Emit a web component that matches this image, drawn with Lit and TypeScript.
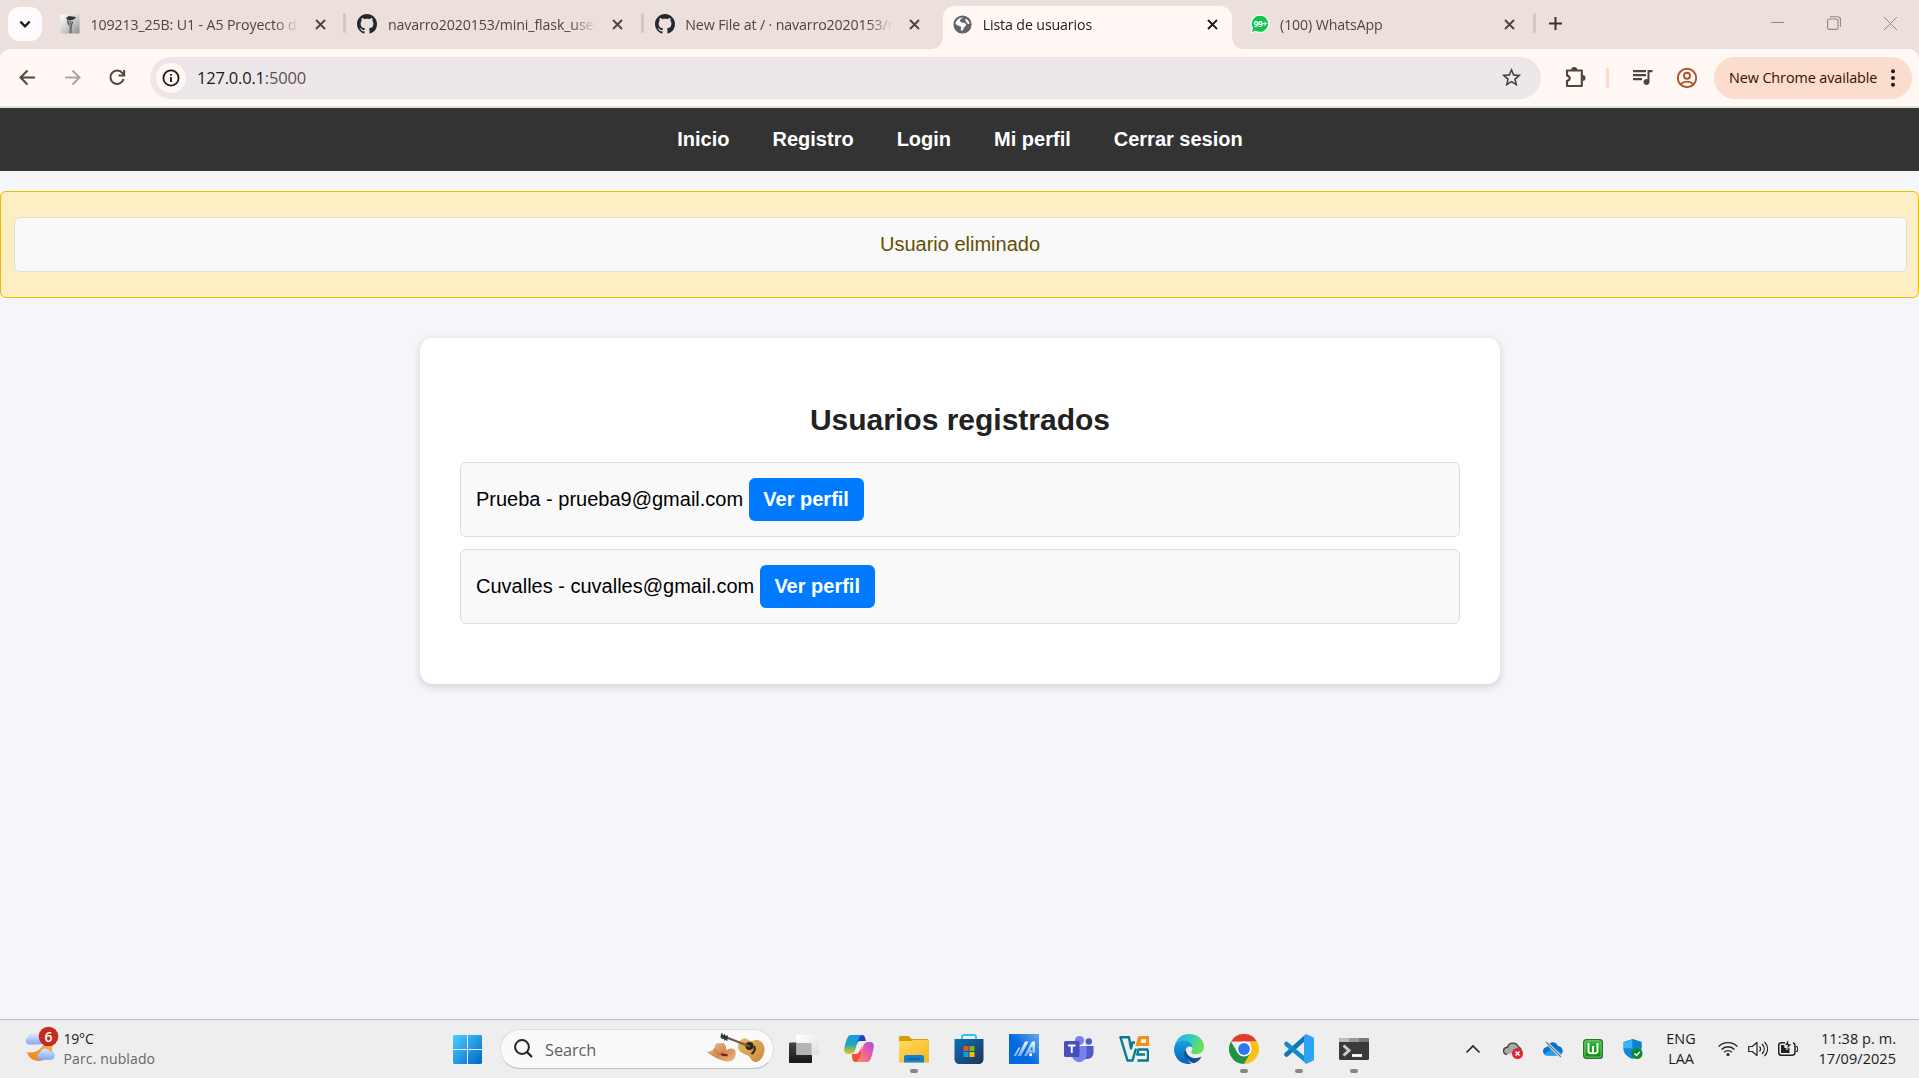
import { LitElement, html, css, svg } from 'lit';
import { customElement } from 'lit/decorators.js';

const icon = (size: number, box: number, body: unknown) =>
  html`<svg width=${size} height=${size} viewBox="0 0 ${box} ${box}" fill="none">${body}</svg>`;

const github = icon(20, 16, svg`<path fill="#24292f" d="M8 0C3.58 0 0 3.58 0 8c0 3.54 2.29 6.53 5.47 7.59.4.07.55-.17.55-.38 0-.19-.01-.82-.01-1.49-2.01.37-2.53-.49-2.69-.94-.09-.23-.48-.94-.82-1.13-.28-.15-.68-.52-.01-.53.63-.01 1.08.58 1.23.82.72 1.21 1.87.87 2.33.66.07-.52.28-.87.51-1.07-1.78-.2-3.64-.89-3.64-3.95 0-.87.31-1.59.82-2.15-.08-.2-.36-1.02.08-2.12 0 0 .67-.21 2.2.82.64-.18 1.32-.27 2-.27s1.36.09 2 .27c1.53-1.04 2.2-.82 2.2-.82.44 1.1.16 1.92.08 2.12.51.56.82 1.27.82 2.15 0 3.07-1.87 3.75-3.65 3.95.29.25.54.73.54 1.48 0 1.07-.01 1.93-.01 2.2 0 .21.15.46.55.38A8.01 8.01 0 0 0 16 8c0-4.42-3.58-8-8-8z"/>`);

const statue = icon(20, 20, svg`
  <defs><linearGradient id="st" x1="0" y1="0" x2="1" y2="1"><stop offset="0" stop-color="#fff"/><stop offset=".5" stop-color="#cfcfcf"/><stop offset="1" stop-color="#8d8d8d"/></linearGradient></defs>
  <rect x=".5" y=".5" width="19" height="19" rx="1" fill="url(#st)"/>
  <path fill="#333" d="M6 4l3-2 7 1-2 2.500-4 1-3-1z"/><path fill="#888" d="M8 6.500l5 1-1 5-1.500 7H9l.5-6.500-2-3z"/><path stroke="#555" d="M7.500 6l1 5M13 7.500l-2 4.500v7"/>`);

const globe = icon(19, 24, svg`<circle cx="12" cy="12" r="11.5" fill="#5f6368"/>
  <path fill="#fff8f5" d="M13 3.2c-1.2 1-2.600 1.200-3.600 2.400-1.200 1.500-.2 3 1.300 3.700 2 1 4.900.3 5.800 2.300.6 1.500-.8 2.700-2 3.600-1 .8-1 2.500-2 3.900-.6.9-2.300 1-2.700-.1-.3-1.200.9-2.200.5-3.400-.6-1.600-3.300-1.200-4.800-2.500C4 11.700 3 10.800 3 11c.5-4 4.500-8.200 10-7.800z"/><path fill="#fff8f5" d="M16 4.500c2.600 1.300 4.600 3.700 4.900 6.500-1.500.6-3-.1-3.700-1.400-.8-1.500-2.400-2.700-1.200-5.100z"/>`);

const whatsapp = html`<svg width="20" height="20" viewBox="0 0 20 20">
  <path d="M10.300 1.200a8.600 8.600 0 1 1-4.500 16L.9 19.200l1.500-5A8.600 8.600 0 0 1 10.300 1.200z" fill="#10c351" stroke="#e8fff0" stroke-width="1.300"/>
  <text x="10.300" y="13" text-anchor="middle" font-family="Open Sans, sans-serif" font-weight="700" font-size="8.500" fill="#fff" letter-spacing="-.4">99+</text></svg>`;

const cross = (c: string) => icon(11, 11, svg`<path d="M1 1l9 9M10 1l-9 9" stroke=${c} stroke-width="1.9"/>`);

interface Tab { title: string; art: unknown; active?: boolean; bar?: boolean; }
const tabs: Tab[] = [
  { title: '109213_25B: U1 - A5 Proyecto d', art: statue, bar: true },
  { title: 'navarro2020153/mini_flask_user', art: github, bar: true },
  { title: 'New File at / · navarro2020153/m', art: github },
  { title: 'Lista de usuarios', art: globe, active: true },
  { title: '(100) WhatsApp', art: whatsapp, bar: true },
];

@customElement('browser-tabs')
class BrowserTabs extends LitElement {
  static styles = css`
    :host { display: flex; height: 49px; background: #ebe0db; font-family: 'Open Sans', sans-serif; color: #51443c; }
    svg { display: block; }
    .search { width: 34px; height: 34px; margin: 7px 5px 0 8px; border-radius: 12px; background: #fffbff; display: grid; place-items: center; }
    .tab { width: 297.4px; height: 49px; position: relative; padding: 0 0 1px 13px; box-sizing: border-box; display: flex; align-items: center; }
    .art { width: 20px; display: grid; place-items: center; }
    .title { margin-left: 10.5px; width: 210px; white-space: nowrap; overflow: hidden; font-size: 14.2px; letter-spacing: -0.12px; line-height: 24px; padding-top: 1px;
      -webkit-mask-image: linear-gradient(90deg, #000 87%, transparent 99%); }
    .close { margin-left: 14px; display: grid; }
    .bar::after { content: ''; position: absolute; right: -2px; top: 13px; height: 20px; width: 3px; border-radius: 2px; background: #d3c6c1; }
    .active { color: #201a17; }
    .shape { position: absolute; left: -8px; top: 6px; }
    .active .art, .active .title, .active .close { position: relative; }
    .plus { margin: 17px 0 0 15.5px; }
    .wins { margin-left: auto; display: flex; height: 46px; align-items: center; padding-right: 22px; gap: 43px; }
  `;
  render() {
    return html`
      <div class="search">${icon(14, 12, svg`<path d="M2 4l4 4 4-4" stroke="#201a17" stroke-width="2"/>`)}</div>
      ${tabs.map(t => html`<div class="tab ${t.active ? 'active' : ''} ${t.bar ? 'bar' : ''}">
        ${t.active ? html`<svg class="shape" width="313" height="43" viewBox="0 0 313 43"><path fill="#fff8f5" d="M0 43c7 0 12-5 12-12V12C12 5 17 0 24 0h265c7 0 12 5 12 12v19c0 7 5 12 12 12z"/></svg>` : ''}
        <span class="art">${t.art}</span><span class="title">${t.title}</span>
        <span class="close">${cross(t.active ? '#201a17' : '#51443c')}</span></div>`)}
      <span class="plus">${icon(13, 13, svg`<path d="M6.500 0v13M0 6.500h13" stroke="#3c322c" stroke-width="2"/>`)}</span>
      <div class="wins">
        ${icon(13, 13, svg`<path d="M0 5.500h13" stroke="#938984"/>`)}
        ${icon(14, 14, svg`<rect x=".6" y="3" width="10.400" height="10.400" rx="1.500" stroke="#938984" stroke-width="1.100"/><path d="M3 .7h7.500a3 3 0 0 1 3 3V11" stroke="#938984" stroke-width="1.100"/>`)}
        ${icon(13, 13, svg`<path d="M0 0l13 13M13 0L0 13" stroke="#938984"/>`)}
      </div>`;
  }
}

@customElement('browser-toolbar')
class BrowserToolbar extends LitElement {
  static styles = css`
    :host { display: block; background: #ebe0db; font-family: 'Open Sans', sans-serif; }
    .row { height: 57px; background: #fff8f5; border-radius: 10px 10px 0 0; border-bottom: 2px solid #e9e0dd; display: flex; align-items: center; box-sizing: content-box; }
    svg { display: block; }
    .back { margin-left: 17px; }
    .mid { margin-left: 24px; }
    .omni { margin-left: 22px; width: 1391px; height: 42px; border-radius: 21px; background: #ede7e9; display: flex; align-items: center; }
    .info { width: 30px; height: 30px; margin-left: 6px; border-radius: 50%; background: #fff8f5; display: grid; place-items: center; }
    .url { margin-left: 11px; font-size: 16.5px; letter-spacing: -0.2px; color: #201a17; flex: 1; }
    .port { color: #5b5150; }
    .star { margin-right: 18px; }
    .puzzle { margin-left: 23px; }
    .rule { width: 2.5px; height: 20px; margin-left: 19px; border-radius: 1px; background: #fcd9c8; }
    .music { margin-left: 22px; }
    .user { margin-left: 21px; }
    .pill { margin-left: 16.5px; width: 198px; height: 42px; border-radius: 21px; background: #fbdccd; display: flex; align-items: center; font-size: 14.4px; letter-spacing: -0.1px; color: #351000; box-sizing: border-box; padding-left: 15px; white-space: nowrap; }
    .label { width: 153.5px; }
  `;
  render() {
    return html`<div class="row">
      <span class="back">${icon(21, 21, svg`<path d="M18 10.500H4M10.500 3.500l-7 7 7 7" stroke="#51443c" stroke-width="2"/>`)}</span>
      <span class="mid">${icon(21, 21, svg`<path d="M3 10.500h14M10.500 3.500l7 7-7 7" stroke="#afa5a0" stroke-width="2"/>`)}</span>
      <span class="mid">${icon(21, 21, svg`<path d="M16.600 12A6.700 6.700 0 1 1 15.500 6.200L17 8" stroke="#51443c" stroke-width="2"/><path d="M17.200 3v5.600h-5.600" stroke="#51443c" stroke-width="2"/>`)}</span>
      <div class="omni">
        <span class="info">${icon(18, 18, svg`<circle cx="9" cy="9" r="7.600" stroke="#201a17" stroke-width="1.800"/><path d="M9 8v5M9 5v1.800" stroke="#201a17" stroke-width="1.800"/>`)}</span>
        <span class="url">127.0.0.1<span class="port">:5000</span></span>
        <span class="star">${icon(23, 24, svg`<path fill="#453c38" d="M22 9.240l-7.190-.62L12 2 9.190 8.630 2 9.240l5.460 4.730L5.820 21 12 17.270 18.180 21l-1.630-7.030L22 9.240zM12 15.400l-3.760 2.270 1-4.280-3.320-2.880 4.380-.38L12 6.100l1.710 4.040 4.380.38-3.320 2.880 1 4.280L12 15.400z"/>`)}</span>
      </div>
      <span class="puzzle">${icon(23, 23, svg`<path d="M3 4.500h14.800v15.500H3v-5.200c3.600-.6 3.600-4.600 0-5.200z" stroke="#51443c" stroke-width="2.100" stroke-linejoin="round"/><path d="M7.200 4a3 3 0 0 1 6 0M18.500 9a3 3 0 0 1 0 6" fill="#51443c"/>`)}</span>
      <span class="rule"></span>
      <span class="music">${icon(24, 24, svg`<path fill="#51443c" d="M15 4H2v2.200h13V4zm0 4H2v2.200h13V8zM2 14.200h9V12H2v2.200zM16.500 4v9.180c-.31-.11-.65-.18-1-.18-1.660 0-3 1.340-3 3s1.340 3 3 3 3-1.340 3-3V6.200H21.500V4h-5z"/>`)}</span>
      <span class="user">${icon(22, 22, svg`<g stroke="#ad5429" stroke-width="1.900"><circle cx="11" cy="11" r="9.200"/><circle cx="11" cy="8.700" r="3"/><path d="M4.500 17.300c3.500-3.600 9.500-3.600 13 0"/></g>`)}</span>
      <div class="pill"><span class="label">New Chrome available</span>
        ${icon(20, 20, svg`<g fill="#201a17"><circle cx="10" cy="3.300" r="2"/><circle cx="10" cy="10" r="2"/><circle cx="10" cy="16.700" r="2"/></g>`)}</div>
    </div>`;
  }
}

const users = [
  { name: 'Prueba', mail: 'prueba9@gmail.com' },
  { name: 'Cuvalles', mail: 'cuvalles@gmail.com' },
];

@customElement('user-page')
class UserPage extends LitElement {
  static styles = css`
    :host { display: block; height: 911px; background: #f4f6fa; font: 20px/23px 'Liberation Sans', Arial, sans-serif; color: #000; }
    .nav { height: 63px; background: #333; display: flex; justify-content: center; align-items: center; gap: 43px; padding-left: 1px; font-weight: 700; color: #fff; }
    .flash { margin-top: 20px; height: 107px; box-sizing: border-box; border: 1px solid #e8bd00; border-radius: 6px; background: #fdeec4; padding: 25px 11px 0 13px; }
    .note { height: 55px; box-sizing: border-box; border: 1px solid #ddd; border-radius: 6px; background: #f9f9f9; color: #664d03; text-align: center; padding: 15px 1px 0 0; }
    .card { width: 1080px; height: 346px; box-sizing: border-box; margin: 40px auto 0; padding: 64px 40px 0; border-radius: 12.5px; background: #fff; box-shadow: 0 2.5px 10px rgba(0,0,0,.15); }
    .title { margin: 0 0 25px; padding-left: 1px; font-size: 30px; line-height: 35px; text-align: center; color: #222; }
    .item { height: 75px; box-sizing: border-box; border: 1px solid #ddd; border-radius: 6px; background: #f9f9f9; margin-bottom: 12px; padding-left: 15.5px; display: flex; align-items: center; gap: 5.5px; }
    .button { height: 43px; width: 115px; border-radius: 6px; background: #007bff; color: #fff; font-weight: 700; display: grid; place-items: center; }
  `;
  render() {
    return html`
      <nav class="nav">${['Inicio', 'Registro', 'Login', 'Mi perfil', 'Cerrar sesion'].map(l => html`<span>${l}</span>`)}</nav>
      <div class="flash"><div class="note">Usuario eliminado</div></div>
      <div class="card"><h2 class="title">Usuarios registrados</h2>
        ${users.map(u => html`<div class="item"><span>${u.name} - ${u.mail}</span><span class="button">Ver perfil</span></div>`)}
      </div>`;
  }
}

const weather = html`<svg width="36" height="36" viewBox="0 0 36 36">
  <defs><linearGradient id="cl" x1="0" y1="0" x2="0" y2="1"><stop offset="0" stop-color="#dbe9ff"/><stop offset="1" stop-color="#86a9ee"/></linearGradient>
  <linearGradient id="mo" x1="0" y1="1" x2="1" y2="0"><stop offset="0" stop-color="#ee7c1b"/><stop offset="1" stop-color="#f9bb3a"/></linearGradient></defs>
  <path fill="url(#mo)" d="M3 26c7 2 15-2 17-10l8 2c2 8-4 17-13 17C9 35 4 31 3 26z"/>
  <path fill="url(#cl)" d="M4 18.500a4 4 0 0 1 .5-7.500c1-4.500 8-5 10-.5 5 0 5.500 8 1 8z"/>
  <path fill="url(#cl)" stroke="#7ea5e8" stroke-width=".5" d="M16 33.500a3.700 3.700 0 0 1 0-7c1.500-5.500 8-5 9.500-1.500 6 0 6.500 8.500 1 8.500z"/>
  <circle cx="24.500" cy="10.500" r="9.800" fill="#c42b1c"/>
  <text x="24.500" y="15.500" text-anchor="middle" font-family="Open Sans, sans-serif" font-size="14" font-weight="600" fill="#fff">6</text></svg>`;

const guitar = html`<svg width="60" height="32" viewBox="0 0 60 32">
  <defs><linearGradient id="gt" x1="0" y1="0" x2="1" y2="1"><stop offset="0" stop-color="#e9b968"/><stop offset="1" stop-color="#c98a38"/></linearGradient>
  <linearGradient id="ht" x1="0" y1="0" x2="1" y2="1"><stop offset="0" stop-color="#f3c08c"/><stop offset=".55" stop-color="#d28a52"/><stop offset="1" stop-color="#f0bd88"/></linearGradient></defs>
  <path fill="url(#gt)" d="M32 14c0-4 4-10 8-8.500 3 1 4 3.500 8 2 6-2 11 3 10.500 10C58 23 54 29.500 49 29c-4-.5-4-5-8-7-4-1-9-4-9-8z"/>
  <circle cx="43.500" cy="13" r="4" fill="#2e2219"/><path d="M18 3.500l26 10" stroke="#74594a" stroke-width="2.400"/>
  <path d="M15 1l7 2.500-1.500 4-6-3z" fill="#26323a"/><path d="M16 0v6M18.500 1v6.500M21 2v6" stroke="#33414b"/><path d="M48 13c2 3 0 6-2.500 8" stroke="#2e2219" stroke-width="2" fill="none"/>
  <path fill="url(#ht)" d="M0 18.500c3 .5 7-.5 8.500-3 .5-5 3-6.500 5.500-5 3-1.500 6 0 6 4l.5 3c2-2.500 8-3 9 1 1 6-2 10-7 10-8-.5-16-5-22.500-10z"/><path d="M15 21c2 1 4 1.500 6.500 1" stroke="#7d1f16" stroke-width="2.200" fill="none"/><path d="M8.500 15.500c-.8 3 4 5.500 7 5.800" stroke="#a8683a" fill="none"/></svg>`;

const apps: { art: unknown; open?: boolean }[] = [
  { art: icon(30, 30, svg`<defs><linearGradient id="tv" x1="0" y1="0" x2="0" y2="1"><stop stop-color="#454545"/><stop offset="1" stop-color="#161616"/></linearGradient><linearGradient id="tw" x1="0" y1="0" x2="1" y2="1"><stop stop-color="#fff"/><stop offset="1" stop-color="#dedede"/></linearGradient></defs>
    <rect y="8.500" width="23" height="20.500" rx="1" fill="url(#tv)"/><rect x="7.500" y="1" width="22.500" height="20" rx="1" fill="url(#tw)"/><path d="M7.500 9H22.500v12h-15z" fill="#b4b4b4"/>`) },
  { art: icon(30, 30, svg`<defs><linearGradient id="ca" x1="0" y1="0" x2="0" y2="1"><stop stop-color="#1799ed"/><stop offset=".5" stop-color="#22a7b5"/><stop offset="1" stop-color="#e8ca16"/></linearGradient><linearGradient id="cb" x1="1" y1="0" x2="0" y2="1"><stop stop-color="#a64de5"/><stop offset=".5" stop-color="#ef5f9a"/><stop offset="1" stop-color="#ff9559"/></linearGradient></defs>
    <path d="M14 1h4c3 0 3 3 4 6h-6c-2 0-3 2-4 5z" fill="#1744ba"/><path d="M16 28h-4c-3 0-4-2-4-8h4c3 0 4-4 6-8z" fill="#ef5038"/>
    <path d="M7 1h11c-3 1-4 5-6 12-1 4-2 7-6 7H4c-5 0-4-5-3-9C3 4 4 1 7 1z" fill="url(#ca)"/><path d="M23 28H12c3-1 4-5 6-12 1-4 2-8 6-8h2c5 0 4 5 3 9-2 8-3 11-6 11z" fill="url(#cb)"/>`) },
  { open: true, art: icon(30, 30, svg`<defs><linearGradient id="fo" x1="0" y1="0" x2="1" y2="1"><stop stop-color="#ffdb61"/><stop offset="1" stop-color="#f8b619"/></linearGradient></defs>
    <path d="M0 3.500C0 2.500.8 2 2 2h7c2 0 2.500 3 4 3h15c1.200 0 2 1 2 2v5H0z" fill="#d99b04"/><path d="M0 8c0-1 1-1 2-1h10l3-1h13c1.200 0 2 .8 2 2v20.500H0z" fill="url(#fo)"/><path d="M5 28.500V23c0-1.200.8-2 2-2h16c1.200 0 2 .8 2 2v5.500z" fill="#1480ce"/><path d="M9 25h12" stroke="#0b5795" stroke-width="1.200"/>`) },
  { art: icon(30, 30, svg`<defs><linearGradient id="ms" x1="0" y1="0" x2="1" y2="1"><stop stop-color="#0971b9"/><stop offset="1" stop-color="#243253"/></linearGradient></defs>
    <path d="M8 6V3c0-1.300.7-2 2-2h10c1.300 0 2 .7 2 2v3" stroke="#29c7ee" stroke-width="1.800"/><path d="M.5 5h29v20c0 3-2 5-5 5h-19c-3 0-5-2-5-5z" fill="url(#ms)"/><path fill="#f25022" d="M9.500 12h5v5h-5z"/><path fill="#7fba00" d="M15.500 12h5v5h-5z"/><path fill="#00a4ef" d="M9.500 18h5v5h-5z"/><path fill="#ffb900" d="M15.500 18h5v5h-5z"/>`) },
  { art: icon(30, 30, svg`<defs><linearGradient id="ma" x1="1" y1="0" x2=".4" y2=".5"><stop stop-color="#65a9f0"/><stop offset="1" stop-color="#0269df"/></linearGradient><linearGradient id="mb" x1="0" y1="1" x2="0" y2="0"><stop stop-color="#6fb0f5"/><stop offset="1" stop-color="#f0f8ff"/></linearGradient></defs><path fill="url(#ma)" d="M0 0h30v30H0z"/><path fill="url(#mb)" d="M4.500 22L9.500 13.500h2L7 22zM8.500 22L16 7.500h3.500L12 22zM15 22L23 7.500h3V19h-2.600v-7.500l-2.600 4.700h2.100v2.200h-3.300L17.600 22z"/><circle cx="21.600" cy="20.700" r="1.600" fill="#fff"/>`) },
  { art: icon(30, 30, svg`<circle cx="15.500" cy="6.500" r="4.600" fill="#7b83eb"/><circle cx="24.800" cy="7.500" r="3.200" fill="#5059c9"/><path d="M22 12h7.500v7a6 6 0 0 1-6 6H20z" fill="#5059c9"/><path d="M8 12h14.500v9a7.200 7.200 0 0 1-14.500 0z" fill="#7b83eb"/><rect y="7" width="15.500" height="16" rx="1.500" fill="#4650b8"/><path d="M4 11.500h7.500M7.750 11.500V19" stroke="#fff" stroke-width="1.900"/>`) },
  { art: icon(30, 30, svg`<g stroke="#087b8c" stroke-width="2.400" stroke-linejoin="round"><path d="M16 8.500h-2.500l-1.500 6-2-11.300H1.400L8.500 26.500h5l3.500-12"/><path d="M29 15.500H19.500l-1.200 5H26M29 15.500v11H18.500"/></g><path fill="#f39019" fill-rule="evenodd" d="M16.500 12l2.200-8c.4-1.400 1-2 2.300-2h9v10zm5-3H27V5h-4.500z"/>`) },
  { art: icon(30, 30, svg`<defs><linearGradient id="ea" x1="0" y1="0" x2="1" y2=".4"><stop stop-color="#27aee2"/><stop offset=".5" stop-color="#31c6ce"/><stop offset="1" stop-color="#67e24f"/></linearGradient><linearGradient id="eb" x1="0" y1="0" x2="0" y2="1"><stop stop-color="#1aa1e2"/><stop offset="1" stop-color="#0760b8"/></linearGradient></defs>
    <path d="M.5 13C2 4 8 0 15 0c9 0 15 6 15 12.500 0 6-4.500 7.700-7.500 7.700-5 0-6-1.700-5-3 .6-.9 1-2 1-3.200C18.500 8 8 4 .5 13z" fill="url(#ea)"/><path d="M0 15.500C0 9 6 6.500 10 6.500c5 0 8.500 3.500 8.500 7.500-2-3-7.500-1-7.500 4 0 6 5 11.500 7 11.500C9 32 0 25 0 15.500z" fill="url(#eb)"/><path d="M11.500 15c-4 7 2 12 8 14.300 3-.8 6.500-3.300 8-6.800-7 3.800-15 1-16-7.500z" fill="#124f98"/>`) },
  { open: true, art: icon(30, 30, svg`<path fill="#e33b2e" d="M2 7.500a15 15 0 0 1 26 0H15z"/><path fill="#fbc116" d="M28 7.500a15 15 0 0 1-13 22.500l6.500-11.250L21.500 7.500z"/><path fill="#229342" d="M2 7.500A15 15 0 0 0 15 30l6.500-11.250L8.500 18.750z"/><circle cx="15" cy="15" r="7.500" fill="#fff"/><circle cx="15" cy="15" r="5.900" fill="#2d78ec"/>`) },
  { open: true, art: icon(30, 30, svg`<path d="M2.500 20.500L21.500 3.500" stroke="#0877bd" stroke-width="4.500" stroke-linecap="round"/><path d="M2.500 10L21.500 26" stroke="#128acb" stroke-width="4.500" stroke-linecap="round"/><path d="M22 0l7 3.200c.7.300 1 .8 1 1.500v20.600c0 .7-.3 1.200-1 1.500L22 30l-2-2.500V2z" fill="#2aa4f3"/>`) },
  { open: true, art: icon(30, 30, svg`<rect y="4" width="30" height="22" rx="1.500" fill="#3a3a3a"/><path d="M0 8V5.500C0 4.500.5 4 1.500 4H10v4z" fill="#bdbdbd"/><path d="M10 4h10v4H10z" fill="#999"/><path d="M20 4h8.500c1 0 1.500.5 1.500 1.500V8H20z" fill="#777"/><path d="M4.500 11.500l5.500 5-5.500 5" stroke="#ccc" stroke-width="3"/><path d="M13 21.500h10" stroke="#fff" stroke-width="2.800"/>`) },
];

@customElement('task-bar')
class TaskBar extends LitElement {
  static styles = css`
    :host { display: flex; height: 59px; box-sizing: border-box; border-top: 1px solid #bcbfbf; background: #eee; align-items: center; font-family: 'Open Sans', sans-serif; color: #1b1b1b; }
    svg { display: block; }
    .weather { display: flex; width: 429px; padding-left: 24px; box-sizing: content-box; align-items: center; }
    .art { width: 36px; margin-top: -11px; }
    .temp { margin-left: 3.5px; font-size: 14px; line-height: 20px; margin-top: -1px; letter-spacing: -0.2px; }
    .sky { color: #666; letter-spacing: 0.13px; }
    .search { margin: 0 0 1px 18px; width: 274px; height: 40px; border-radius: 20px; background: #fafafa; border: 1px solid #ddd; border-bottom-color: #c0c0c0; box-sizing: border-box; display: flex; align-items: center; padding-left: 13px; font-size: 16.4px; color: #5f5f5f; letter-spacing: -0.1px; }
    .word { margin: 1px 0 0 12px; width: 161px; }
    .apps { display: flex; gap: 25px; margin-left: 15px; }
    .app { width: 30px; height: 39px; margin-top: 8px; display: flex; flex-direction: column; justify-content: space-between; align-items: center; }
    .dot { width: 8px; height: 4px; border-radius: 2px; background: #858585; }
    .tray { margin-left: 94px; display: flex; align-items: center; gap: 20px; }
    .lang { font-size: 14.4px; line-height: 20px; text-align: center; width: 50px; margin: -1px -8px 0 -7px; }
    .status { display: flex; gap: 10px; align-items: center; }
    .clock { margin-left: auto; padding-right: 23px; text-align: right; font-size: 14.5px; letter-spacing: 0.05px; line-height: 20px; margin-top: -1px; white-space: nowrap; }
  `;
  render() {
    return html`
      <div class="weather"><span class="art">${weather}</span><div class="temp">19°C<div class="sky">Parc. nublado</div></div></div>
      ${icon(29, 29, svg`<defs><linearGradient id="w" x1="0" y1="0" x2="29" y2="29" gradientUnits="userSpaceOnUse"><stop stop-color="#4bd0ff"/><stop offset="1" stop-color="#0067c8"/></linearGradient></defs><path fill="url(#w)" d="M1 0h13v14H0V1zM15 0h13l1 1v13H15zM0 15h14v14H1l-1-1zM15 15h14v13l-1 1H15z"/>`)}
      <div class="search">${icon(19, 19, svg`<circle cx="8" cy="8" r="6.900" stroke="#252525" stroke-width="2"/><path d="M13 13l5 5" stroke="#252525" stroke-width="2.300"/>`)}<span class="word">Search</span>${guitar}</div>
      <div class="apps">${apps.map(a => html`<div class="app">${a.art}${a.open ? html`<span class="dot"></span>` : ''}</div>`)}</div>
      <div class="tray">
        ${icon(20, 20, svg`<path d="M3.500 13.500L10 7l6.500 6.500" stroke="#252525" stroke-width="1.600"/>`)}
        ${icon(20, 20, svg`<path d="M4 15.500C-.8 15 -.5 8.500 4.500 8.300 6 3 13 2.500 15.500 8c1.500.5 2.500 2 2.500 4" fill="#a9a9a9" stroke="#414141" stroke-width="1.400"/><circle cx="14.500" cy="14.500" r="5.500" fill="#dc2635"/><path d="M12.500 12.500l4 4M16.500 12.500l-4 4" stroke="#fff" stroke-width="1.500"/>`)}
        ${icon(20, 20, svg`<path d="M5 16.500C-1.500 16.500-1.500 8.500 4 8 6 2 13 1.500 15 7c6 .5 6.500 9.500 0 9.500z" fill="#0873ce"/><path d="M1 15L10 9l9 5c-1 2-2 2.500-4 2.500H5c-2 0-3-.500-4-1.500z" fill="#239ee6"/><path d="M3 3l15 15" stroke="#eee" stroke-width="3"/><path d="M3 3l15 15" stroke="#777" stroke-width="1.300"/>`)}
        ${icon(20, 20, svg`<defs><linearGradient id="gw" x1="0" y1="0" x2="0" y2="1"><stop stop-color="#39b843"/><stop offset="1" stop-color="#008900"/></linearGradient></defs><rect x=".7" y=".7" width="18.600" height="18.600" rx="2.500" fill="url(#gw)" stroke="#28752c" stroke-width="1.400"/><rect x="1.900" y="1.900" width="16.200" height="16.200" rx="1.500" stroke="#a5e6a5" stroke-width=".7"/><path d="M5.500 4v9l1.300 1.200h6.400l1.300-1.200V4M10 7v6.500" stroke="#f4fff4" stroke-width="2"/>`)}
        ${icon(20, 20, svg`<path d="M9.500 0l9 3v6c0 5-4 8.500-9 11C4 17.500.5 14 .5 9V3z" fill="#1590dd"/><path d="M9.500 0C7 2 3.500 3 .5 3v6.500h9z" fill="#37b6f4"/><path d="M.5 9.500h9V20C4 17.500.500 14 .5 9.500z" fill="#1386d8"/><path d="M9.500 0l9 3v6.500h-9z" fill="#0f7fd2"/><circle cx="14" cy="14.500" r="5.500" fill="#10872a"/><path d="M11.500 14.500l2 2 3.200-3.500" stroke="#fff" stroke-width="1.500"/>`)}
        <div class="lang">ENG<br>LAA</div>
        <div class="status">
          ${icon(20, 20, svg`<g stroke="#222" stroke-width="1.300"><path d="M.7 7.500c5-5.300 13.600-5.300 18.600 0M3.500 10.500c3.500-3.700 9.500-3.700 13 0M6.200 13.300c2-2.200 5.600-2.200 7.600 0"/></g><circle cx="10" cy="15.500" r="1.600" fill="#222"/>`)}
          ${icon(20, 20, svg`<g stroke="#222" stroke-width="1.200" stroke-linejoin="round"><path d="M.7 7.500h3.500L9 3.500v13l-4.800-4H.7z"/><path d="M11.500 7.500c1.300 1.500 1.300 3.500 0 5M14 5c3 3 3 7 0 10M16.500 2.800c4 4.500 4 10 0 14.400"/></g>`)}
          ${icon(20, 20, svg`<path d="M7 3.700H3.500c-2 0-2.800 1-2.800 3v6.600c0 2 .8 3 2.800 3H14c2 0 3-1 3-3V6.700c0-1.500-.7-2.500-2-2.900" stroke="#222" stroke-width="1.500"/><path d="M18 7.500h.5c1 0 1.200 1 1.200 2.500s-.2 2.500-1.200 2.500H18" stroke="#222" stroke-width="1.200"/><path d="M3 6h3.500v3h5v5H3z" fill="#222"/><path d="M10.500 0L6.500 6.500h3L8.500 11l5.500-6h-3.200z" fill="#222" stroke="#eee" stroke-width=".8"/>`)}
        </div>
      </div>
      <div class="clock">11:38 p. m.<br>17/09/2025</div>`;
  }
}

@customElement('app-root')
class AppRoot extends LitElement {
  static styles = css`:host { display: flex; flex-direction: column; height: 1078px; overflow: hidden; }`;
  render() {
    return html`<browser-tabs></browser-tabs><browser-toolbar></browser-toolbar><user-page></user-page><task-bar></task-bar>`;
  }
}
